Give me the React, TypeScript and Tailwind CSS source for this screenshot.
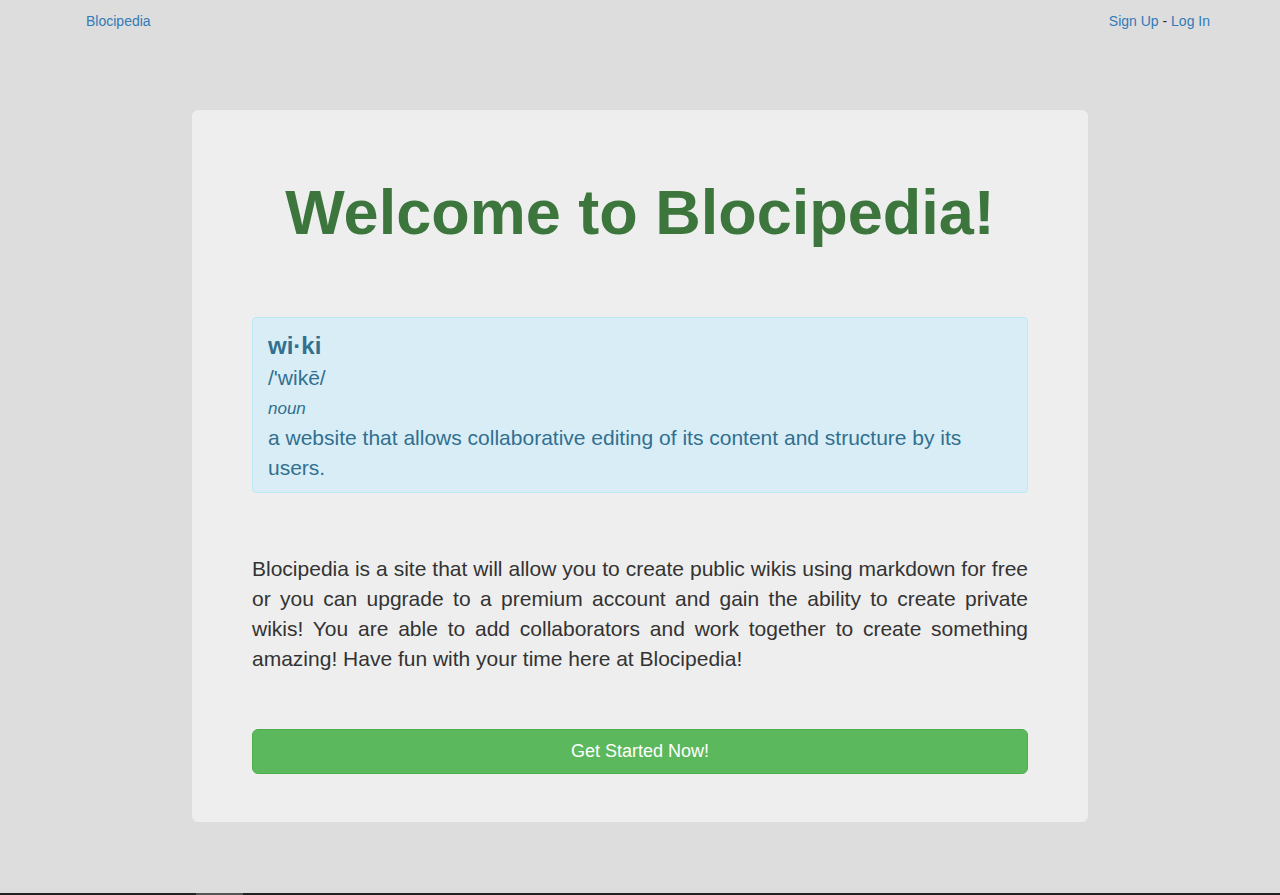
export default function App() {
  return (
    <div
      className="h-screen flex flex-col bg-[#dddddd] text-[#333333] overflow-hidden"
      style={{ fontFamily: '"Liberation Sans", Arial, sans-serif' }}
    >
      <nav className="flex justify-between pl-[86px] pr-[70px] pt-[11px] text-[14px] leading-[20px]">
        <a href="#" className="text-[#337ab7]">Blocipedia</a>
        <div>
          <a href="#" className="text-[#337ab7]">Sign Up</a>
          <span className="text-[#333333]"> - </span>
          <a href="#" className="text-[#337ab7]">Log In</a>
        </div>
      </nav>

      <main className="mx-auto mt-[79px] w-[896px] rounded-[6px] bg-[#eeeeee] px-[60px] pt-[68px] pb-[48px]">
        <h1 className="text-center text-[63px] leading-[69px] font-bold text-[#3c763d]">
          Welcome to Blocipedia!
        </h1>

        <div className="mt-[70px] rounded-[4px] border border-[#bce8f1] bg-[#d9edf7] px-[15px] pt-[16px] pb-[9px] text-[#31708f]">
          <div className="text-[24px] leading-[24px] font-bold">wi·ki</div>
          <div className="mt-[5px] text-[21px] leading-[30px]">/'wikē/</div>
          <div className="mt-[2px] text-[17px] leading-[28px] italic">noun</div>
          <p className="text-[21px] leading-[30px]">
            a website that allows collaborative editing of its content and structure by its users.
          </p>
        </div>

        <p className="mt-[61px] text-justify text-[21px] leading-[30px] text-[#333333]">
          Blocipedia is a site that will allow you to create public wikis using markdown for free or you can upgrade to a premium account and gain the ability to create private wikis! You are able to add collaborators and work together to create something amazing! Have fun with your time here at Blocipedia!
        </p>

        <button className="mt-[55px] flex h-[45px] w-full items-center justify-center rounded-[6px] border border-[#4cae4c] bg-[#5cb85c] text-[18px] text-white">
          Get Started Now!
        </button>
      </main>

      <div className="mt-auto flex h-[2px] bg-[#222222]">
        <div className="ml-[196px] w-[47px] bg-[#555555]" />
      </div>
    </div>
  );
}
